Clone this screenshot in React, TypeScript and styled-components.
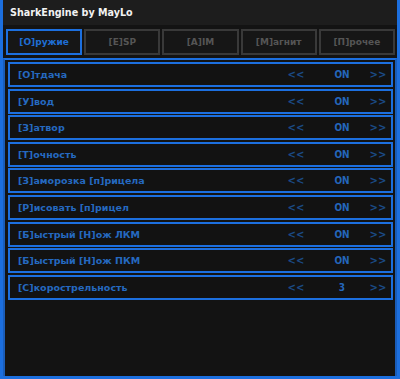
import styled, { createGlobalStyle } from "styled-components";

const GlobalStyle = createGlobalStyle`
  body {
    margin: 0;
    background: #131313;
    font-family: "DejaVu Sans", Verdana, sans-serif;
  }
`;

const Window = styled.div`
  width: 400px;
  height: 379px;
  box-sizing: border-box;
  background: #131313;
  border: 3px solid #1c6fdf;
  border-top: none;
  display: flex;
  flex-direction: column;
`;

const TitleBar = styled.div`
  height: 25px;
  background: #1d1d1d;
  color: #f2f2f2;
  font-size: 9.6px;
  font-weight: bold;
  display: flex;
  align-items: center;
  padding-left: 7px;
`;

const TabBar = styled.div`
  display: grid;
  grid-template-columns: repeat(5, 1fr);
  gap: 2px;
  padding: 4px 2px 3px 3px;
`;

const Tab = styled.div<{ $active?: boolean }>`
  height: 26px;
  box-sizing: border-box;
  border: 2px solid ${(p) => (p.$active ? "#1c6fdf" : "#393939")};
  background: #161616;
  color: ${(p) => (p.$active ? "#1f6ed4" : "#555555")};
  font-size: 9px;
  font-weight: bold;
  display: flex;
  align-items: center;
  justify-content: center;
`;

const Panel = styled.div`
  flex: 1;
  border: 2px solid #1a5db9;
  border-bottom: none;
  border-top-color: #1c6fdf;
  padding: 2px 2px 0 3px;
  display: flex;
  flex-direction: column;
  gap: 1.6px;
`;

const Row = styled.div`
  height: 25px;
  box-sizing: border-box;
  border: 2px solid #1c6fdf;
  background: #121212;
  display: grid;
  grid-template-columns: 1fr 46px 46px 26px;
  align-items: center;
  font-size: 9.5px;
  font-weight: bold;
`;

const Label = styled.span`
  color: #2569c0;
  padding-left: 8px;
`;

const Arrow = styled.span`
  color: #1b4a85;
  text-align: center;
  font-size: 10px;
`;

const Value = styled.span`
  color: #2466bb;
  text-align: center;
  font-family: "Liberation Sans Narrow", "DejaVu Sans Condensed", sans-serif;
  font-size: 10px;
`;

const tabs = ["[O]ружие", "[E]SP", "[A]IM", "[M]агнит", "[П]рочее"];

const options = [
  { label: "[O]тдача", value: "ON" },
  { label: "[У]вод", value: "ON" },
  { label: "[З]атвор", value: "ON" },
  { label: "[Т]очность", value: "ON" },
  { label: "[З]аморозка [п]рицела", value: "ON" },
  { label: "[Р]исовать [п]рицел", value: "ON" },
  { label: "[Б]ыстрый [Н]ож ЛКМ", value: "ON" },
  { label: "[Б]ыстрый [Н]ож ПКМ", value: "ON" },
  { label: "[С]корострельность", value: "3" },
];

const App = () => {
  return (
    <>
      <GlobalStyle />
      <Window>
        <TitleBar>SharkEngine by MayLo</TitleBar>
        <TabBar>
          {tabs.map((t, i) => (
            <Tab key={t} $active={i === 0}>
              {t}
            </Tab>
          ))}
        </TabBar>
        <Panel>
          {options.map((o) => (
            <Row key={o.label}>
              <Label>{o.label}</Label>
              <Arrow>&lt;&lt;</Arrow>
              <Value>{o.value}</Value>
              <Arrow>&gt;&gt;</Arrow>
            </Row>
          ))}
        </Panel>
      </Window>
    </>
  );
};

export default App;
